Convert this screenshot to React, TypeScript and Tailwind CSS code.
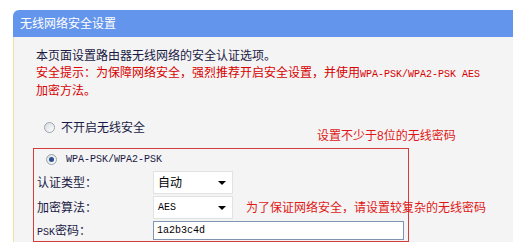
import React from 'react';

const cjk = "font-['Liberation_Sans','Noto_Sans_CJK_SC',sans-serif]";
const mono = "font-['Liberation_Mono','Noto_Sans_CJK_SC',monospace]";

function Radio({ checked }: { checked?: boolean }) {
    return (
        <span className="w-[11px] h-[11px] rounded-full border border-[#9aa3ad] bg-gradient-to-br from-[#d8dde2] to-white flex items-center justify-center shrink-0">
            {checked && <span className="w-[5px] h-[5px] rounded-full bg-[#2a4f8f]" />}
        </span>
    );
}

function Select({ value, latin }: { value: string; latin?: boolean }) {
    return (
        <div className="w-[80px] shrink-0 h-full bg-white border border-[#e2e2e2] flex items-center justify-between pl-[4px] pr-[6px]">
            <span className={latin ? `${mono} text-[10px] text-black` : 'text-[12px] text-black'}>{value}</span>
            <span className="w-0 h-0 border-l-[4px] border-r-[4px] border-t-[4px] border-l-transparent border-r-transparent border-t-black" />
        </div>
    );
}

export default function App() {
    return (
        <div className={`relative w-[513px] h-[242px] overflow-hidden bg-white pt-[10px] pl-[13px] ${cjk} text-[12px]`}>
            {/* Title bar */}
            <div className="h-[27px] rounded-tl-[6px] bg-[#6495ec] text-white flex items-center pl-[7px]">
                无线网络安全设置
            </div>

            {/* Body */}
            <div className="h-full bg-[#f4f4f4] border-l border-[#eee0a6] pl-[22px] pt-[11px]">
                <div className="leading-[17px] whitespace-nowrap">
                    <p className="text-[#1a1a44]">本页面设置路由器无线网络的安全认证选项。</p>
                    <p className="text-[#d80000]">
                        安全提示：为保障网络安全，强烈推荐开启安全设置，并使用<span className={`${mono} text-[10px]`}>WPA-PSK/WPA2-PSK AES</span>
                    </p>
                    <p className="text-[#d80000]">加密方法。</p>
                </div>

                <div className="mt-[19px] h-[17px] flex items-center pl-[8px] gap-[6px] text-[#1a1a44]">
                    <Radio />
                    <span>不开启无线安全</span>
                </div>

                {/* WPA box */}
                <div className="mt-[12px] ml-[-3px] w-[376px] border border-[#d43c3c] px-[3px] pt-[2px] pb-[1px] text-[#1a1a44]">
                    <div className="h-[17px] flex items-center pl-[9px] gap-[9px]">
                        <Radio checked />
                        <span className={`${mono} text-[10px]`}>WPA-PSK/WPA2-PSK</span>
                    </div>
                    <div className="mt-[3px] h-[23px] flex items-center">
                        <span className="w-[116px] shrink-0">认证类型：</span>
                        <Select value="自动" />
                    </div>
                    <div className="mt-[2px] h-[23px] flex items-center">
                        <span className="w-[116px] shrink-0">加密算法：</span>
                        <Select value="AES" latin />
                        <span className="ml-[13px] shrink-0 whitespace-nowrap text-[#e01818]">为了保证网络安全，请设置较复杂的无线密码</span>
                    </div>
                    <div className="mt-[2px] h-[19px] flex items-center">
                        <span className="w-[116px] shrink-0"><span className={`${mono} text-[10px]`}>PSK</span>密码：</span>
                        <div className="w-[251px] shrink-0 h-full bg-white border border-[#7f95b3] flex items-center pl-[3px]">
                            <span className={`${mono} text-[10px] text-black`}>1a2b3c4d</span>
                        </div>
                    </div>
                </div>
            </div>

            {/* Annotation */}
            <span className="absolute left-[317px] top-[127px] text-[#e01818] whitespace-nowrap">设置不少于8位的无线密码</span>
        </div>
    );
}
